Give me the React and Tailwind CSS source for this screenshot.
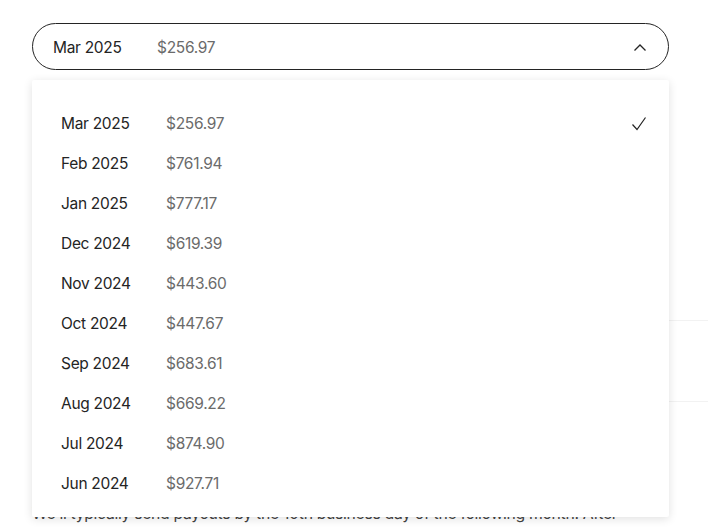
import React from "react";

const items = [
  ["Mar 2025", "$256.97"],
  ["Feb 2025", "$761.94"],
  ["Jan 2025", "$777.17"],
  ["Dec 2024", "$619.39"],
  ["Nov 2024", "$443.60"],
  ["Oct 2024", "$447.67"],
  ["Sep 2024", "$683.61"],
  ["Aug 2024", "$669.22"],
  ["Jul 2024", "$874.90"],
  ["Jun 2024", "$927.71"],
];

export default function App() {
  return (
    <div
      className="relative w-[708px] h-[528px] overflow-hidden bg-white text-[#242424]"
      style={{ fontFamily: "Inter, 'Liberation Sans', sans-serif" }}
    >
      {/* Background page content */}
      <div className="pt-[23px] pl-[32px]">
        <button className="flex items-center w-[637px] h-[47px] rounded-full border border-[#242424] pt-[2px] pl-[20px] pr-[20px] text-[15.5px] tracking-[-0.02em]">
          <span className="w-[104px] text-left">Mar 2025</span>
          <span className="text-[#6b6b6b]">$256.97</span>
          <svg className="ml-auto" width="16" height="16" viewBox="0 0 16 16" fill="none">
            <path d="M2.5 10.5 L8 5 L13.5 10.5" stroke="#242424" strokeWidth="1.3" />
          </svg>
        </button>
        <div className="h-[250px]" />
        <div className="border-t border-[#f2f2f2] h-[81px]" />
        <div className="border-t border-[#f2f2f2]" />
        <p className="mt-[100px] text-[15.75px] leading-[24px] text-[#424242] whitespace-nowrap tracking-[-0.02em]">
          We'll typically send payouts by the 10th business day of the following month. After
        </p>
      </div>

      {/* Dropdown menu */}
      <div className="absolute left-[32px] top-[80px] w-[637px] h-[437px] bg-white rounded-[2px] shadow-[0_2px_10px_rgba(0,0,0,0.12)] overflow-hidden">
        <div className="pt-[24px]">
          {items.map(([m, p], i) => (
            <div
              key={m}
              className="flex items-center h-[40px] pl-[29px] pr-[22px] text-[15.5px] tracking-[-0.02em]"
            >
              <span className="w-[105px]">{m}</span>
              <span className="text-[#6b6b6b]">{p}</span>
              {i === 0 && (
                <svg className="ml-auto" width="16" height="16" viewBox="0 0 16 16" fill="none">
                  <path d="M1.5 8.5 L6 13.5 L14.5 1.5" stroke="#242424" strokeWidth="1.2" />
                </svg>
              )}
            </div>
          ))}
        </div>
      </div>
    </div>
  );
}
